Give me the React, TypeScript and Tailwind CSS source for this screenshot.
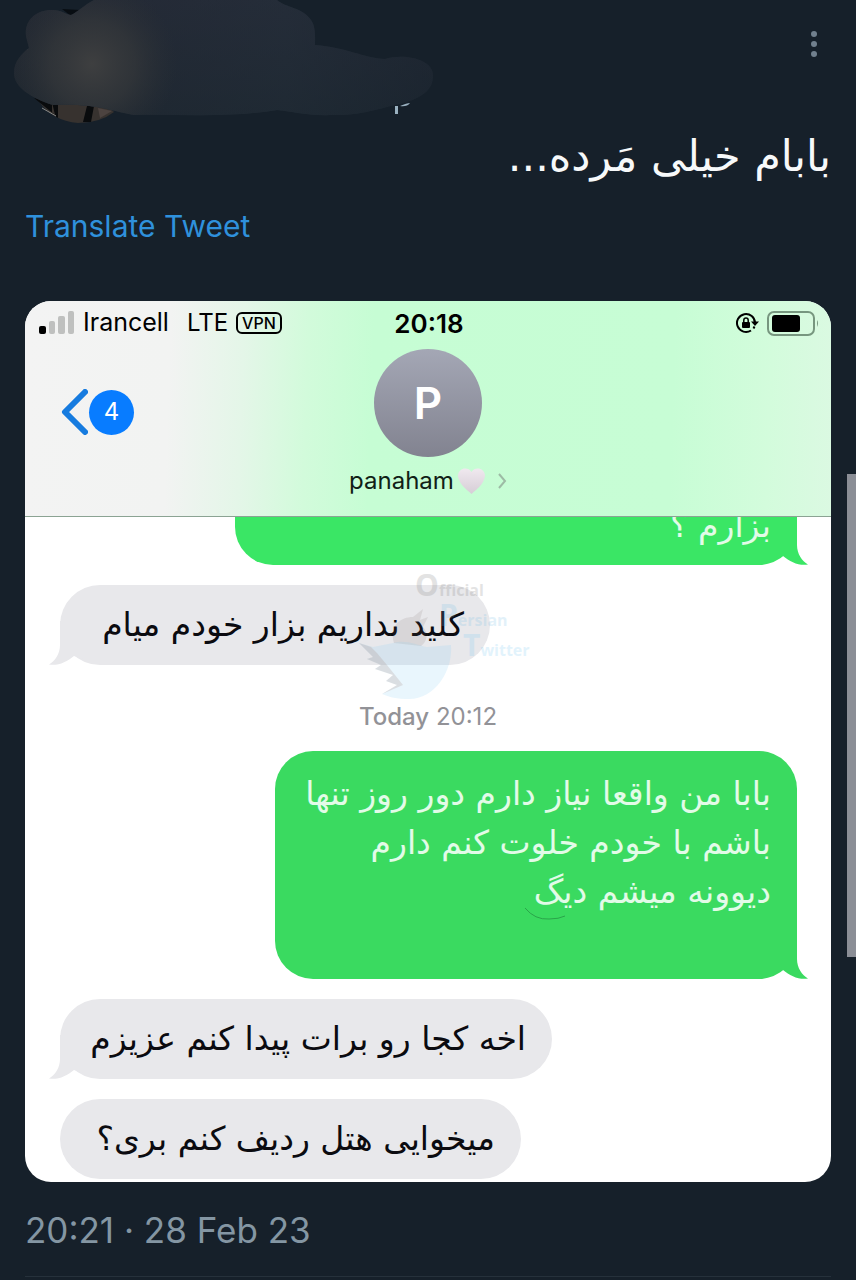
import type { ReactNode } from "react";

const persian = "font-['DejaVu_Sans','Noto_Sans',sans-serif]";

const cloud =
  "M26 36C24 19 38 9 53 10C61 10 67 15 71 15C78 12 84 5 94 0H277C286 8 302 7 311 20C316 27 315 38 315 45C345 47 364 58 385 59C404 53 434 59 433 76C433 89 424 96 407 102C384 107 361 116 333 115C307 116 291 111 277 110C231 118 181 114 134 115C111 111 96 103 53 105C31 98 14 87 14 73C14 62 21 54 29 48Z";

function HiddenProfile() {
  return (
    <svg className="h-[126px] w-[450px] shrink" viewBox="0 0 450 126" role="img" aria-label="Hidden profile">
      <defs>
        <linearGradient id="smudge" x1="0" x2="1" y1="0" y2="0">
          <stop offset="0" stopColor="#23292f" />
          <stop offset="0.35" stopColor="#242c36" />
          <stop offset="0.65" stopColor="#25303a" />
          <stop offset="1" stopColor="#1b252f" />
        </linearGradient>
        <radialGradient id="glow" cx="92" cy="64" r="85" gradientUnits="userSpaceOnUse">
          <stop offset="0" stopColor="#3e3f40" />
          <stop offset="0.5" stopColor="#34373a" stopOpacity="0.75" />
          <stop offset="1" stopColor="#2b3035" stopOpacity="0" />
        </radialGradient>
        <linearGradient id="shade" x1="0" x2="0" y1="0" y2="1">
          <stop offset="0" stopColor="#242937" stopOpacity="0.5" />
          <stop offset="1" stopColor="#1b252f" stopOpacity="0.6" />
        </linearGradient>
      </defs>
      <path d="M38 100Q52 121 78 123Q100 123 114 112L98 98Z" fill="#37322f" />
      <path d="M34 98L55 115L52 102ZM52 103H58V118L52 114ZM87 106H94L91 122H83Z" fill="#090b0d" />
      <path d="M98 108L112 111L100 118Z" fill="#4c4340" />
      <path d="M42 108L56 116" stroke="#8a8a88" strokeWidth="1" />
      <path d="M62 9L71 16L80 10Z" fill="#080d12" />
      <circle cx="29" cy="51" r="2" fill="#b9cdd8" />
      <path d="M395 106H398V114H395ZM400 106Q407 103 410 103Q407 107 400 106Z" fill="#9ab1c0" />
      <path d={cloud} fill="url(#smudge)" />
      <path d={cloud} fill="url(#shade)" />
      <path d={cloud} fill="url(#glow)" />
    </svg>
  );
}

function Tail({ side, className }: { side: "left" | "right"; className: string }) {
  return (
    <svg
      viewBox="0 0 44 44"
      aria-hidden="true"
      className={`absolute bottom-0 h-11 w-11 ${side === "right" ? "-right-[11px]" : "-left-[11px] -scale-x-100"} ${className}`}
    >
      <path d="M10 0H33V24C33 33 38 40 44 43.500C35 45 26 41 19 35L10 38Z" fill="currentColor" />
    </svg>
  );
}

function Received({ children, width, tail = false }: { children: ReactNode; width: string; tail?: boolean }) {
  return (
    <div className={`relative ml-[35px] flex h-20 max-w-[90%] items-center rounded-[40px] bg-[#e8e8eb] px-[26px] ${width}`}>
      {tail && <Tail side="left" className="text-[#e8e8eb]" />}
      <p dir="rtl" className={`relative w-full whitespace-nowrap text-[33px] leading-[50px] text-[#0b0b10] ${persian}`}>
        {children}
      </p>
    </div>
  );
}

function StatusBar() {
  return (
    <div className="grid h-11 grid-cols-3 items-center pl-3.5 pr-3 text-black">
      <div className="flex items-center whitespace-nowrap text-[25px]">
        <svg className="mr-2 h-6 w-9" viewBox="0 0 36 24" aria-label="Signal" role="img">
          <rect x="0" y="15" width="7" height="8" rx="2" fill="#000" />
          <rect x="10" y="10" width="6" height="13" rx="2" fill="#bfc0bf" />
          <rect x="19" y="5" width="7" height="18" rx="2" fill="#bfc0bf" />
          <rect x="29" y="0" width="6" height="23" rx="2" fill="#bfc0bf" />
        </svg>
        <span>Irancell</span>
        <span className="ml-[18px] text-2xl">LTE</span>
        <span className="ml-2 flex h-[22px] items-center rounded-md border-2 border-black px-1 text-base font-medium">VPN</span>
      </div>
      <time className="text-center text-[26px] font-semibold">20:18</time>
      <div className="flex items-center justify-end gap-2">
        <svg className="h-6 w-6" viewBox="0 0 24 24" aria-label="Rotation lock" role="img">
          <path d="M16 19.500A9 9 0 1 1 20 12M18.500 17.500L19.500 15.500" fill="none" stroke="#000" strokeWidth="2" />
          <path d="M16 10.500H24L20 15Z" fill="#000" />
          <rect x="7" y="11" width="8" height="6" rx="1" />
          <path d="M8.800 11V9.200A2.200 2.200 0 0 1 13.200 9.200V11" fill="none" stroke="#000" strokeWidth="1.500" />
        </svg>
        <svg className="h-[25px] w-[52px]" viewBox="0 0 52 25" aria-label="Battery" role="img">
          <rect x="1" y="1" width="46" height="23" rx="6" fill="none" stroke="#77967f" strokeWidth="2" />
          <rect x="5" y="4" width="28" height="17" rx="3" fill="#000" />
          <path d="M50 9Q52 12 50 16Z" fill="#77967f" />
        </svg>
      </div>
    </div>
  );
}

function ChatHeader() {
  return (
    <header className="h-[216px] border-b border-[#8ba393] bg-[linear-gradient(92deg,#f3f3f3_0%,#f2f3f2_18%,#e4f6e8_27%,#d2fbdb_35%,#c6fdd4_43%,#c7fdd5_80%,#d3fcdc_92%,#dbf9e2_100%)]">
      <StatusBar />
      <div className="grid grid-cols-3 items-start px-9 pt-1">
        <button type="button" aria-label="Back, 4 unread" className="mt-10 flex items-center gap-px justify-self-start">
          <svg className="h-[46px] w-[27px]" viewBox="0 0 27 46" aria-hidden="true">
            <path d="M24 3L4 23L24 43" fill="none" stroke="#167bdf" strokeWidth="6" strokeLinecap="round" strokeLinejoin="round" />
          </svg>
          <span className="flex h-[45px] w-[45px] items-center justify-center rounded-full bg-[#087cff] text-2xl text-white">4</span>
        </button>
        <button type="button" className="flex flex-col items-center">
          <span className="flex h-[108px] w-[108px] items-center justify-center rounded-full bg-linear-to-b from-[#a4a7b5] to-[#828390] text-[44px] font-semibold text-white">P</span>
          <span className="mt-2 flex items-center whitespace-nowrap text-2xl text-[#102016]">
            panaham
            <svg className="ml-1 h-[26px] w-[27px]" viewBox="0 0 27 26" aria-label="White heart" role="img">
              <defs>
                <linearGradient id="heart" x1="0" x2="0" y1="0" y2="1">
                  <stop offset="0" stopColor="#f0e9ef" />
                  <stop offset="1" stopColor="#d6cdd6" />
                </linearGradient>
              </defs>
              <path d="M13.500 26C8 21 1 16 0 8C0 0 10 -2 13.500 4C17 -2 27 0 27 8C26 16 19 21 13.500 26Z" fill="url(#heart)" />
            </svg>
            <svg className="ml-3 h-4 w-2.5" viewBox="0 0 10 16" aria-hidden="true">
              <path d="M2 1L8 8L2 15" fill="none" stroke="#9dbba5" strokeWidth="2" />
            </svg>
          </span>
        </button>
      </div>
    </header>
  );
}

function Watermark() {
  return (
    <div className="pointer-events-none absolute left-[334px] top-[56px] h-32 w-44 font-['Open_Sans',sans-serif] font-bold" aria-hidden="true">
      <svg className="absolute left-0 top-9 h-[92px] w-[100px]" viewBox="0 0 100 92">
        <path d="M35 34C30 16 42 8 54 8L64 0L61 11L69 8L64 18C70 24 68 33 62 37Z" fill="#6d5f5c" opacity="0.13" />
        <path d="M0 34L14 38L34 34C46 30 58 36 68 38L92 36C94 62 76 90 50 90C38 90 30 88 23 85L38 76L27 72L34 66L16 60L22 56L8 50L14 48Z" fill="#8fd0f5" opacity="0.2" />
        <path d="M0 34L12 38L18 44L28 56L36 66L44 76L23 85L38 76L27 72L34 66L16 60L22 56L8 50L14 48Z" fill="#a08078" opacity="0.2" />
      </svg>
      <div className="absolute left-14 top-0 flex flex-col text-base leading-[25px] opacity-20">
        <span className="text-[#777777]"><span className="text-3xl leading-6">O</span>fficial</span>
        <span className="ml-6 text-[#73bce6]"><span className="text-3xl leading-6">P</span>ersian</span>
        <span className="ml-12 text-[#73c6f2]"><span className="text-3xl leading-6">T</span>witter</span>
      </div>
    </div>
  );
}

function Conversation() {
  return (
    <section className="overflow-hidden rounded-[26px] bg-white" aria-label="Conversation">
      <ChatHeader />
      <div className="relative pb-[3px]">
        <div className="relative ml-auto mr-[34px] h-12 w-[562px] max-w-[90%] rounded-b-[38px] bg-[#3ae665] px-[26px]">
          <Tail side="right" className="text-[#3ae665]" />
          <div className="relative h-full overflow-hidden">
            <p dir="rtl" className={`-mt-4 text-[33px] leading-[50px] text-[#e2fbe8] ${persian}`}>بزارم ؟</p>
          </div>
        </div>
        <div className="mt-5">
          <Received width="w-[430px]" tail>کلید نداریم بزار خودم میام</Received>
        </div>
        <p className="mt-9 text-center text-2xl leading-8 text-[#929297]"><span className="font-medium">Today</span> 20:12</p>
        <div className="relative ml-auto mr-[34px] mt-[18px] h-[228px] w-[522px] max-w-[90%] rounded-[38px] bg-[#3ada60] px-[26px] pt-[18px]">
          <Tail side="right" className="text-[#3ada60]" />
          <p dir="rtl" className={`relative whitespace-nowrap text-[33px] leading-[49px] text-[#e2fbe8] ${persian}`}>
            بابا من واقعا نیاز دارم دور روز تنها
            <br />
            باشم با خودم خلوت کنم دارم
            <br />
            دیوونه میشم دیگ
          </p>
          <svg className="absolute left-[248px] top-[155px] h-4 w-11" viewBox="0 0 44 16" aria-hidden="true">
            <path d="M2 2Q12 14 26 13Q36 13 42 10" fill="none" stroke="#2aa54a" strokeWidth="1" />
          </svg>
        </div>
        <div className="mt-5 flex flex-col gap-5">
          <Received width="w-[492px]" tail>اخه کجا رو برات پیدا کنم عزیزم</Received>
          <Received width="w-[461px]">میخوایی هتل ردیف کنم بری؟</Received>
        </div>
        <Watermark />
      </div>
    </section>
  );
}

export default function App() {
  return (
    <main className="relative min-h-screen bg-[#16202a] font-['Inter',sans-serif]">
      <article>
        <div className="flex items-start justify-between">
          <HiddenProfile />
          <button type="button" aria-label="More options" className="mr-7 mt-6 flex h-10 w-7 items-center justify-center">
            <svg className="h-7 w-1.5" viewBox="0 0 6 28" aria-hidden="true" fill="#71808e">
              <circle cx="3" cy="4" r="3" />
              <circle cx="3" cy="14" r="3" />
              <circle cx="3" cy="24" r="3" />
            </svg>
          </button>
        </div>
        <div className="px-[25px]">
          <p dir="rtl" className={`text-[43px] leading-[60px] text-[#f7f9fa] ${persian}`}>بابام خیلی مَرده...</p>
          <a href="#translate" className="mt-5 inline-block text-[30px] leading-10 text-[#2f91dc]">Translate Tweet</a>
          <div className="mt-[55px]">
            <Conversation />
          </div>
          <p className="mt-7 border-b border-[#26313b] pb-[26px] text-[35px] leading-10 text-[#8496a3]">
            <time>20:21 · 28 Feb 23</time>
          </p>
        </div>
      </article>
      <div className="absolute right-0 top-[474px] h-[483px] w-[9px] bg-[#8b8e96]" aria-hidden="true" />
    </main>
  );
}
